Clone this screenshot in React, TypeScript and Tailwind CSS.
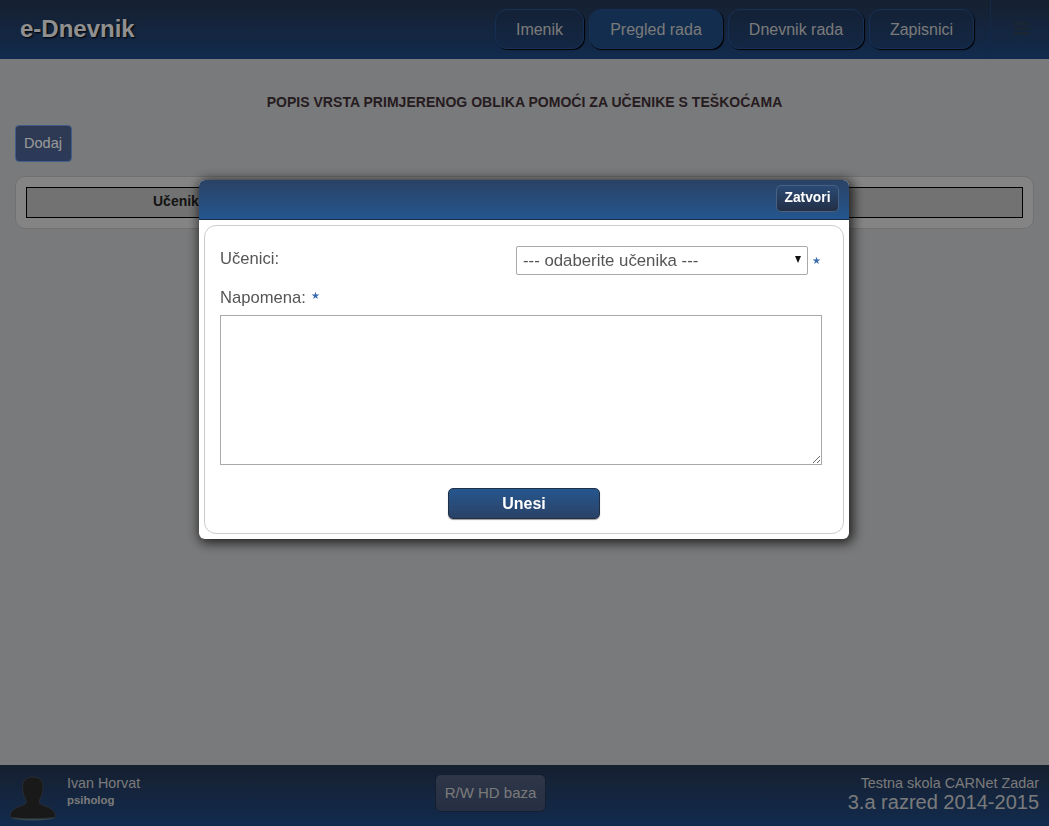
const navItems = [
  { label: "Imenik", width: "w-[89px]", active: false },
  { label: "Pregled rada", width: "w-[134px]", active: true },
  { label: "Dnevnik rada", width: "w-[136px]", active: false },
  { label: "Zapisnici", width: "w-[105px]", active: false },
];

function Avatar() {
  return (
    <svg width="48" height="46" viewBox="0 0 48 46" className="shrink-0">
      <ellipse cx="24" cy="41.500" rx="21" ry="3" fill="#5d7a88" />
      <path
        d="M24 1c6.500 0 10 3.500 10 10 0 5-1.500 9.500-3.500 13-1 2 0 4 2.500 5 5 2.200 13 3 13.500 11.500v.5c-3 1-10 1.500-22.500 1.500S4 42 1 41v-.5C1.500 32 9.500 31.200 14.500 29c2.500-1 3.500-3 2.500-5-2-3.500-3.500-8-3.500-13C13.500 4.500 17.500 1 24 1z"
        fill="#2a2a2a"
        stroke="#4a4f55"
        strokeWidth="0.8"
      />
    </svg>
  );
}

function Star() {
  return <span className="text-[10px] leading-[20px] text-[#3a6ab0]">★</span>;
}

export default function App() {
  return (
    <div className="relative flex h-screen flex-col overflow-hidden bg-[#cacbcd] font-['Liberation_Sans',Arial,sans-serif]">
      <header className="flex h-[59px] shrink-0 items-start bg-gradient-to-b from-[#243550] to-[#1e4882]">
        <div className="ml-5 mt-[12px] text-[24px] leading-[34px] font-bold text-[#f0f0f0] [text-shadow:1px_1px_2px_#000]">
          e-Dnevnik
        </div>
        <nav className="ml-auto mt-[9px] flex gap-[5px]">
          {navItems.map((item) => (
            <button
              key={item.label}
              className={`${item.width} h-[40px] rounded-[12px] border border-[#24508c] pt-[2px] text-[16px] text-[#cccccc] shadow-[1px_1px_1px_#000] ${
                item.active ? "bg-[#1f4b80]" : "bg-gradient-to-b from-[#22385a] to-[#1f4272]"
              }`}
            >
              {item.label}
            </button>
          ))}
        </nav>
        <div className="ml-[16px] h-[59px] w-[59px] border-l border-[#20457a] pl-[23px] pt-[22px]">
          <div className="flex w-[15px] flex-col gap-[2px]">
            <span className="h-[3px] bg-[#2e4058]" />
            <span className="h-[3px] bg-[#2e4058]" />
            <span className="h-[3px] bg-[#2e4058]" />
          </div>
        </div>
      </header>

      <main className="flex-1 px-[15px]">
        <h1 className="mt-[36px] text-center text-[14px] leading-[14px] font-bold tracking-[0.03px] text-[#3f2f35]">
          POPIS VRSTA PRIMJERENOG OBLIKA POMOĆI ZA UČENIKE S TEŠKOĆAMA
        </h1>
        <button className="mt-[16px] h-[37px] w-[57px] rounded-[4px] border border-[#6a9ae8] bg-gradient-to-b from-[#4e6088] to-[#4a6294] pr-[1px] text-[14.5px] text-white">
          Dodaj
        </button>
        <div className="mt-[14px] h-[53px] rounded-[10px] border border-[#bbbbbb] bg-[#dddddd] p-[10px]">
          <div className="h-[31px] border border-black bg-[#bfbfbf] pl-[126px] text-[14px] leading-[27px] font-bold text-[#222222]">
            Učenik
          </div>
        </div>
      </main>

      <footer className="flex h-[61px] shrink-0 items-start bg-gradient-to-b from-[#243550] to-[#1e4882]">
        <div className="ml-[9px] mt-[11px]">
          <Avatar />
        </div>
        <div className="ml-[10px] mt-[10px] text-[#cccccc]">
          <div className="text-[14.3px] leading-[16px]">Ivan Horvat</div>
          <div className="text-[11.4px] leading-[18px] font-bold">psiholog</div>
        </div>
        <button className="absolute left-[435px] mt-[9px] h-[38px] w-[111px] rounded-[6px] border border-[#22324e] bg-gradient-to-b from-[#4e5c78] to-[#3f4e70] text-[15px] text-[#cccccc]">
          R/W HD baza
        </button>
        <div className="ml-auto mr-[10px] mt-[10px] text-right text-[#cccccc]">
          <div className="text-[14.4px] leading-[16px]">Testna skola CARNet Zadar</div>
          <div className="text-[20px] leading-[22px]">3.a razred 2014-2015</div>
        </div>
      </footer>

      <div className="fixed inset-0 flex items-start justify-center bg-black/40 pr-[1px] pt-[180px]">
        <div className="flex h-[359px] w-[650px] flex-col rounded-[6px] bg-white shadow-[2px_2px_12px_2px_rgba(0,0,0,0.75)]">
          <div className="flex h-[40px] shrink-0 items-start justify-end rounded-t-[6px] border-b border-[#1a2c44] bg-gradient-to-b from-[#2a4265] to-[#23568f] pr-[10px] pt-[5px]">
            <button className="h-[27px] w-[63px] rounded-[5px] border border-[#4a6080] bg-gradient-to-b from-[#2a4a75] to-[#222f45] text-[13.8px] font-bold text-white">
              Zatvori
            </button>
          </div>
          <div className="mx-[5px] mt-[5px] flex h-[309px] flex-col rounded-[12px] border border-[#cccccc] px-[15px] pt-[20px]">
            <div className="flex items-start text-[16.6px] text-[#555555]">
              <label className="w-[296px] leading-[26px]">Učenici:</label>
              <div className="relative">
                <select className="block h-[29px] w-[292px] appearance-none rounded-[2px] border border-[#a9a9a9] bg-white pl-[6px] text-[16.8px] text-[#555555]">
                  <option>--- odaberite učenika ---</option>
                </select>
                <svg width="6" height="7" viewBox="0 0 6 7" className="absolute right-[7px] top-[10px]">
                  <polygon points="0,0 6,0 3,7" fill="#111111" />
                </svg>
              </div>
              <span className="ml-[4px] mt-[5px] flex">
                <Star />
              </span>
            </div>
            <div className="mt-[10px] flex h-[22px] items-start text-[16.6px] leading-[26px] text-[#555555]">
              <label>Napomena:</label>
              <span className="ml-[5px] mt-[1px] flex">
                <Star />
              </span>
            </div>
            <textarea className="mt-[8px] block h-[150px] w-[602px] border border-[#a9a9a9] bg-white" />
            <div className="flex justify-center">
              <button className="mt-[23px] h-[31px] w-[152px] rounded-[5px] border border-[#1f2f46] bg-gradient-to-b from-[#25568f] to-[#2a4266] text-[16px] font-bold text-white shadow-[0_1px_1px_#999]">
                Unesi
              </button>
            </div>
          </div>
        </div>
      </div>
    </div>
  );
}
